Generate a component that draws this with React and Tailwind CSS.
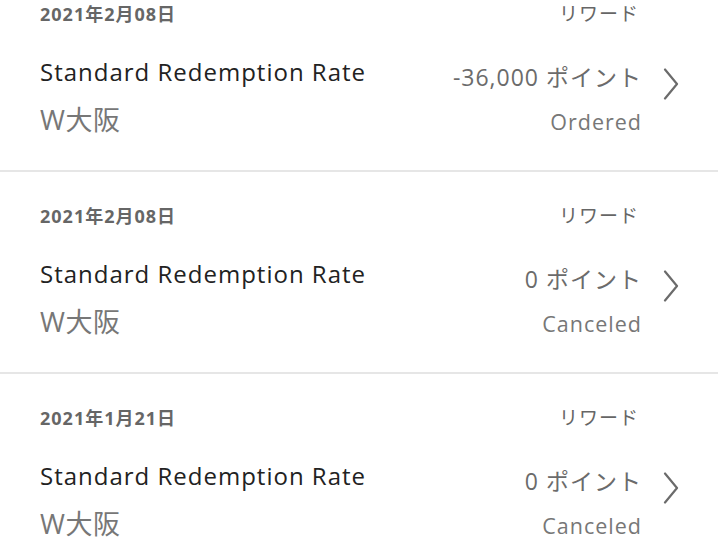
import React from "react";

const rows = [
  { date: "2021年2月08日", pts: "-36,000 ポイント", status: "Ordered" },
  { date: "2021年2月08日", pts: "0 ポイント", status: "Canceled" },
  { date: "2021年1月21日", pts: "0 ポイント", status: "Canceled" },
];

function Chevron() {
  return (
    <svg width="16" height="32" viewBox="0 0 16 32" fill="none">
      <path d="M2 1.5 L14 16 L2 30.5" stroke="#6b6b6b" strokeWidth="2.2" strokeLinecap="round" strokeLinejoin="round" />
    </svg>
  );
}

function Row({ r }) {
  return (
    <div className="flex h-[202px] border-b-2 border-[#e6e6e6] pl-10 pr-[39px]">
      <div className="flex flex-1 flex-col pt-8">
        <div className="h-6 text-[18px] font-bold leading-6 tracking-[1px] text-[#666]">{r.date}</div>
        <div className="mt-[30px] h-8 text-[24px] leading-8 tracking-[1px] text-[#222]">Standard Redemption Rate</div>
        <div className="mt-[15px] h-[34px] text-[27px] leading-[34px] tracking-[0.5px] text-[#777]">W大阪</div>
      </div>
      <div className="flex flex-col items-end pt-8">
        <div className="mr-[3px] h-6 text-[19px] leading-6 tracking-[1px] text-[#666]">リワード</div>
        <div className="mt-9 h-[30px] text-[23px] leading-[30px] tracking-[1px] text-[#6b6b6b]">{r.pts}</div>
        <div className="mt-4 h-7 text-[21.5px] leading-7 tracking-[1px] text-[#777]">{r.status}</div>
      </div>
      <div className="ml-[21px] pt-[98px]">
        <Chevron />
      </div>
    </div>
  );
}

export default function App() {
  return (
    <div
      className="h-[543px] w-[718px] overflow-hidden bg-white"
      style={{ fontFamily: '"Open Sans", "Noto Sans CJK JP", sans-serif' }}
    >
      <div className="-mt-[30px]">
        {rows.map((r, i) => (
          <Row key={i} r={r} />
        ))}
      </div>
    </div>
  );
}
